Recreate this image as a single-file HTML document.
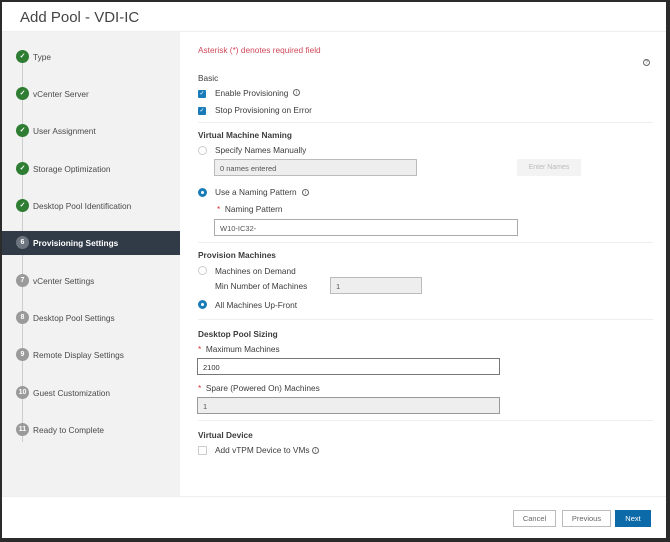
<!DOCTYPE html>
<html><head><style>
*{margin:0;padding:0;box-sizing:border-box}
body{width:670px;height:542px;background:#2b2b2b;font-family:"Liberation Sans",sans-serif;position:relative;overflow:hidden;color:#333}
.win{position:absolute;left:2px;top:2px;width:664px;height:536px;background:#fff}
.a{position:absolute;white-space:nowrap}
.t{font-size:8.3px;color:#3c3c3c}
.h{font-size:8.3px;font-weight:bold;color:#3c3c3c}
.side{position:absolute;left:0;top:30px;width:178px;height:464px;background:#f2f2f3}
.c{position:absolute;left:14px;width:13px;height:13px;border-radius:50%;background:#2e7d32;color:#fff;font-size:7px;text-align:center;line-height:13px;font-weight:bold}
.g{background:#9a9a9a}
.line{position:absolute;left:20px;width:1px;background:#ccc}
.st{position:absolute;left:31px;font-size:8.3px;color:#4a4a4a}
.in{position:absolute;border:1px solid #aaa;height:17px;font-size:7.5px;color:#555;padding:4px 5px;background:#fff}
.dis{background:#eee;border-color:#bbb}
.cb{position:absolute;width:8px;height:8px;background:#1a7bb9;border-radius:1px;color:#fff;font-size:6px;line-height:8px;text-align:center}
.rd{position:absolute;width:9px;height:9px;border-radius:50%;border:1px solid #ccc;background:#fff}
.rs{border:3px solid #1a7bb9}
.hr{position:absolute;left:196px;width:455px;height:1px;background:#eee}
.btn{position:absolute;top:508px;height:17px;border:1px solid #bbb;font-size:7.5px;color:#666;text-align:center;line-height:15px}
.i{position:absolute;width:7px;height:7px;border:1px solid #666;border-radius:50%;font-size:5px;text-align:center;line-height:6px;color:#666}
.req{color:#d33}
</style></head><body>
<div class="win">
<div class="a" style="left:18px;top:7px;font-size:15px;color:#444">Add Pool - VDI-IC</div>
<div style="position:absolute;left:0;top:29px;width:664px;height:1px;background:#eee"></div>
<div class="side">
<div class="line" style="top:30px;height:380px"></div>
</div>
<div style="position:absolute;left:0;top:229px;width:178px;height:24px;background:#313b48"></div>
<div class="c" style="top:48px">✓</div><div class="st" style="top:50px">Type</div>
<div class="c" style="top:85px">✓</div><div class="st" style="top:87px">vCenter Server</div>
<div class="c" style="top:122px">✓</div><div class="st" style="top:124px">User Assignment</div>
<div class="c" style="top:160px">✓</div><div class="st" style="top:162px">Storage Optimization</div>
<div class="c" style="top:197px">✓</div><div class="st" style="top:199px">Desktop Pool Identification</div>
<div class="c g" style="top:234px;background:#6d7580">6</div><div class="st" style="top:236px;color:#fff;font-weight:bold">Provisioning Settings</div>
<div class="c g" style="top:272px">7</div><div class="st" style="top:274px">vCenter Settings</div>
<div class="c g" style="top:309px">8</div><div class="st" style="top:311px">Desktop Pool Settings</div>
<div class="c g" style="top:346px">9</div><div class="st" style="top:348px">Remote Display Settings</div>
<div class="c g" style="top:384px">10</div><div class="st" style="top:386px">Guest Customization</div>
<div class="c g" style="top:421px">11</div><div class="st" style="top:423px">Ready to Complete</div>

<div class="a t" style="left:196px;top:43px;color:#d04a5a">Asterisk (*) denotes required field</div>
<div class="i" style="left:641px;top:57px">?</div>
<div class="a t" style="left:196px;top:71px">Basic</div>
<div class="cb" style="left:196px;top:88px">✓</div><div class="a t" style="left:213px;top:86px">Enable Provisioning</div><div class="i" style="left:291px;top:87px">i</div>
<div class="cb" style="left:196px;top:105px">✓</div><div class="a t" style="left:213px;top:103px">Stop Provisioning on Error</div>
<div class="hr" style="top:120px"></div>
<div class="a h" style="left:196px;top:128px">Virtual Machine Naming</div>
<div class="rd" style="left:196px;top:144px"></div><div class="a t" style="left:213px;top:143px">Specify Names Manually</div>
<div class="in dis" style="left:212px;top:157px;width:203px">0 names entered</div>
<div class="a" style="left:515px;top:157px;width:64px;height:17px;background:#f3f3f3;font-size:7px;color:#bbb;text-align:center;line-height:17px">Enter Names</div>
<div class="rd rs" style="left:196px;top:186px"></div><div class="a t" style="left:213px;top:185px">Use a Naming Pattern</div><div class="i" style="left:300px;top:187px">i</div>
<div class="a t" style="left:215px;top:202px"><span class="req">*</span>&nbsp; Naming Pattern</div>
<div class="in" style="left:212px;top:217px;width:304px">W10-IC32-</div>
<div class="hr" style="top:240px"></div>
<div class="a h" style="left:196px;top:248px">Provision Machines</div>
<div class="rd" style="left:196px;top:264px"></div><div class="a t" style="left:213px;top:264px">Machines on Demand</div>
<div class="a t" style="left:213px;top:279px">Min Number of Machines</div>
<div class="in dis" style="left:328px;top:275px;width:92px">1</div>
<div class="rd rs" style="left:196px;top:298px"></div><div class="a t" style="left:213px;top:298px">All Machines Up-Front</div>
<div class="hr" style="top:317px"></div>
<div class="a h" style="left:196px;top:327px">Desktop Pool Sizing</div>
<div class="a t" style="left:196px;top:342px"><span class="req">*</span>&nbsp; Maximum Machines</div>
<div class="in" style="left:195px;top:356px;width:303px;border-color:#777;color:#333">2100</div>
<div class="a t" style="left:196px;top:381px"><span class="req">*</span>&nbsp; Spare (Powered On) Machines</div>
<div class="in dis" style="left:195px;top:395px;width:303px;border-color:#999">1</div>
<div class="hr" style="top:418px"></div>
<div class="a h" style="left:196px;top:428px">Virtual Device</div>
<div class="rd" style="left:196px;top:444px;border-radius:1px"></div><div class="a t" style="left:213px;top:443px">Add vTPM Device to VMs</div><div class="i" style="left:310px;top:445px">i</div>

<div style="position:absolute;left:0;top:494px;width:664px;height:1px;background:#eee"></div>
<div class="btn" style="left:511px;width:43px">Cancel</div>
<div class="btn" style="left:560px;width:49px">Previous</div>
<div class="btn" style="left:613px;width:36px;background:#0d6aa8;border-color:#0d6aa8;color:#fff">Next</div>
</div>
</body></html>
